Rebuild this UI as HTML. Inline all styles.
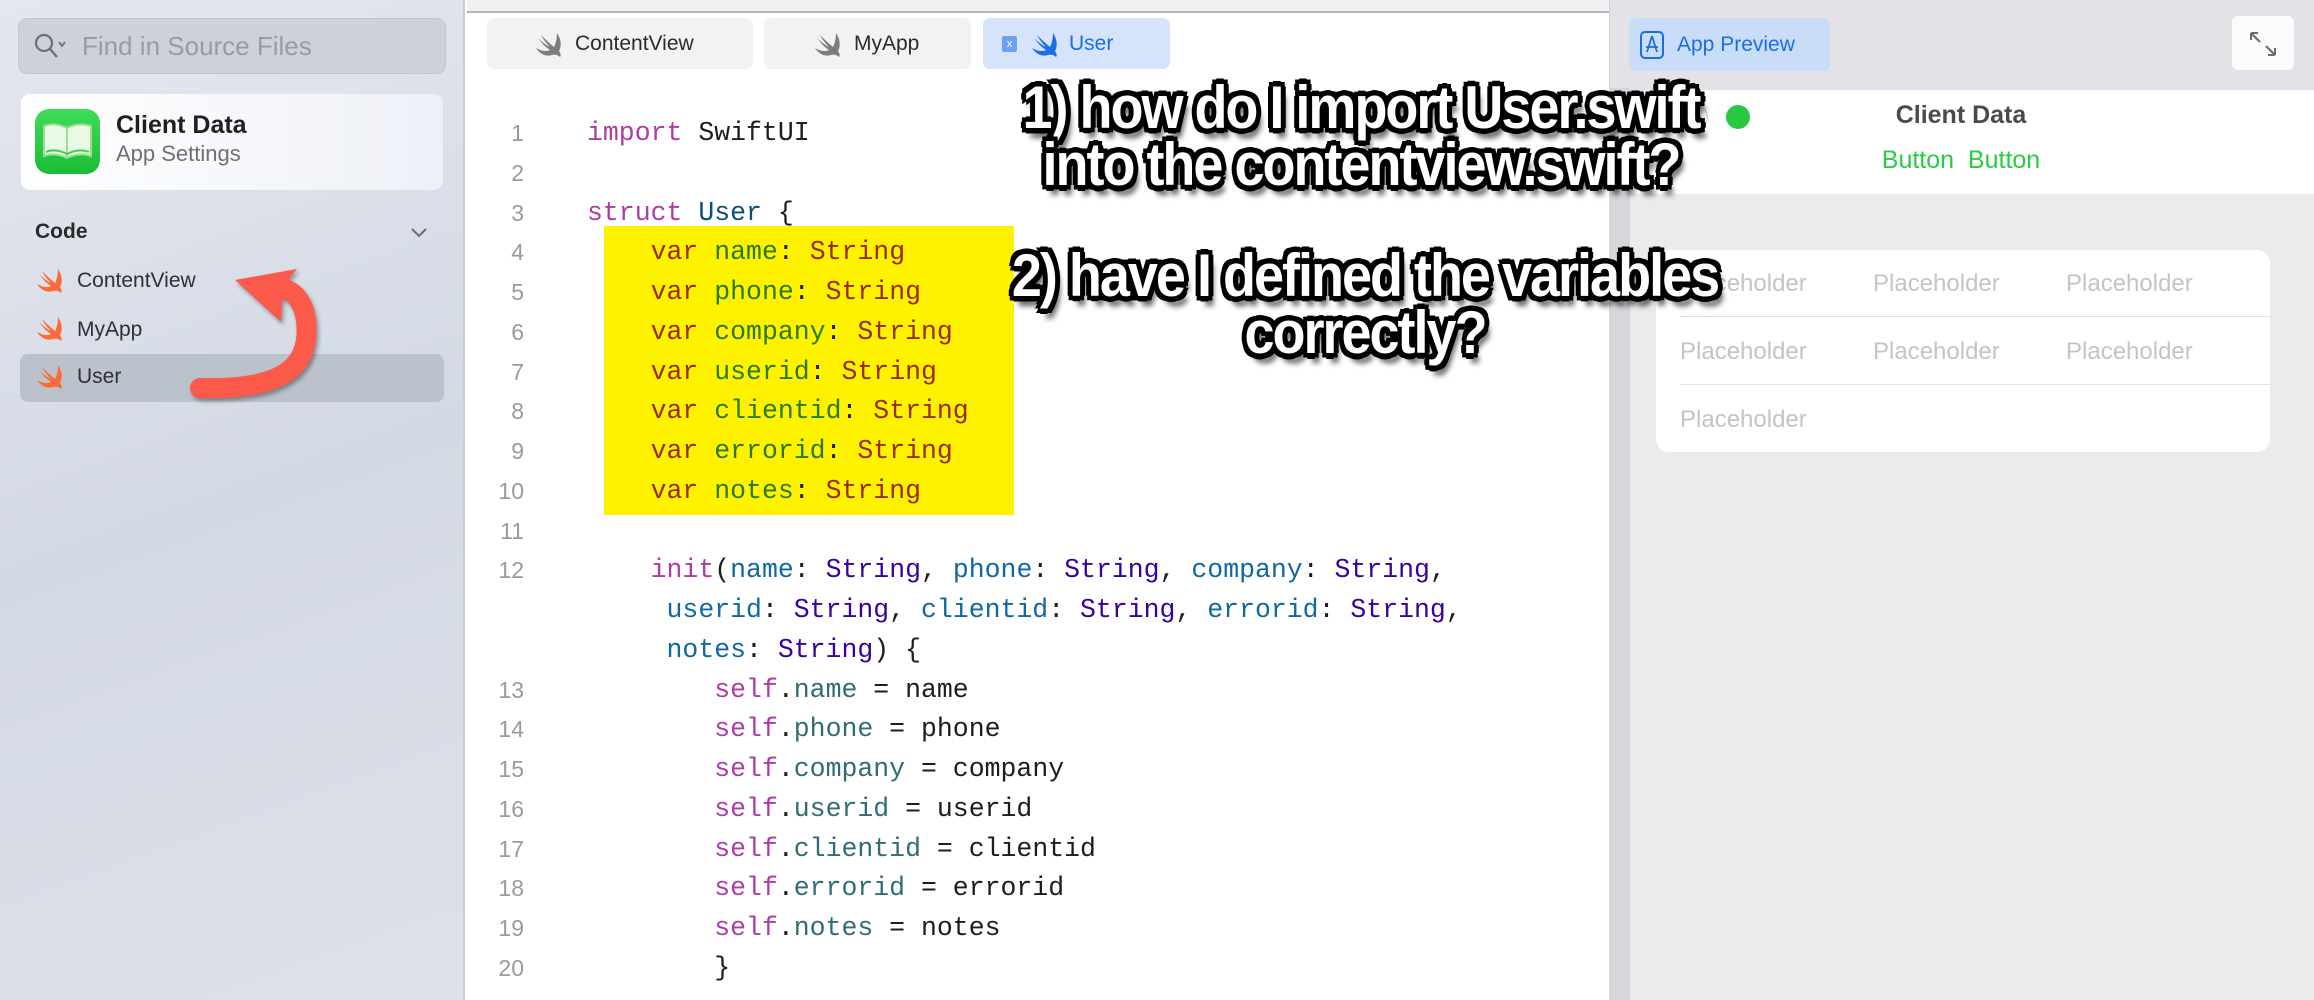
<!DOCTYPE html>
<html><head><meta charset="utf-8"><style>
*{margin:0;padding:0;box-sizing:border-box}
body{width:2314px;height:1000px;overflow:hidden;position:relative;font-family:"Liberation Sans",sans-serif;background:#fff}
.abs{position:absolute}
#side{left:0;top:0;width:465px;height:1000px;background:linear-gradient(160deg,#e4e7ee,#d3d9e4 50%,#dde1e9);border-right:2px solid #c9ccd3}
.code{font-family:"Liberation Mono",monospace;font-size:26.5px;line-height:39.75px;white-space:pre;color:#1d1d1f}
.k{color:#ad3da4}.t{color:#3900a0}.u{color:#0b4f79}.p{color:#326d74}.l{color:#0f68a0}
.yk{color:#9a2a00}.yp{color:#2a7a10}
.ln{font-family:"Liberation Sans",sans-serif;font-size:23px;line-height:39.75px;color:#9a9a9e;text-align:right;white-space:pre}
.tab{top:18px;height:51px;border-radius:7px;background:#f2f2f3;font-size:21px;color:#2b2b2d;display:flex;align-items:center}
.ann{font-family:"Liberation Sans Narrow","Liberation Sans",sans-serif;font-weight:bold;color:#fff;font-size:54px;letter-spacing:-2px;line-height:51px;text-align:center;white-space:nowrap;transform:scaleY(1.12);
text-shadow:-4px -4px 0 #000,4px -4px 0 #000,-4px 4px 0 #000,4px 4px 0 #000,0 -5px 0 #000,0 5px 0 #000,-5px 0 0 #000,5px 0 0 #000,5px 9px 5px rgba(0,0,0,.6)}
.ph{font-size:24px;color:#c4c4c7}
</style></head><body>
<svg width="0" height="0" style="position:absolute"><defs><path id="sw" d="M22 3 C26 9 27 16 24 21 C26 24 26 26 25 27 C23 25 20 24 17 25 C11 27 5 24 1 18 C6 21 11 22 15 20 C10 17 6 12 3 8 C7 12 11 15 15 17 C11 13 8 9 6 5 C10 9 14 13 19 17 C21 13 22 8 22 3 Z"/></defs></svg>
<div id="side" class="abs">
  <div class="abs" style="left:18px;top:18px;width:428px;height:56px;border-radius:9px;background:#cdd1da;border:1px solid #c2c6cf"></div>
  <svg class="abs" style="left:32px;top:30px" width="40" height="32" viewBox="0 0 40 32"><circle cx="12" cy="13" r="8" fill="none" stroke="#6e6f74" stroke-width="2.2"/><path d="M18 19 L25 27" stroke="#6e6f74" stroke-width="2.4"/><path d="M27 12 L30 16 L33 12" fill="none" stroke="#6e6f74" stroke-width="1.8"/></svg>
  <div class="abs" style="left:82px;top:31px;font-size:26px;color:#9a9ca3">Find in Source Files</div>
  <div class="abs" style="left:21px;top:94px;width:422px;height:96px;border-radius:9px;background:linear-gradient(90deg,#fff,#edf0f7)"></div>
  <div class="abs" style="left:35px;top:109px;width:65px;height:65px;border-radius:14px;background:linear-gradient(#3fdc5a,#1bbd33)"></div>
  <svg class="abs" style="left:40px;top:120px" width="55" height="45" viewBox="0 0 55 45"><path d="M4 6 Q15 2 27 8 Q39 2 51 6 L51 36 Q39 32 27 38 Q15 32 4 36 Z" fill="#e9f9e4" stroke="#9adf95" stroke-width="2"/><path d="M27 8 L27 38" stroke="#9adf95" stroke-width="2"/><path d="M6 32 Q15 28 27 34 Q39 28 49 32" fill="none" stroke="#3ccf55" stroke-width="2"/></svg>
  <div class="abs" style="left:116px;top:111px;font-size:25px;font-weight:bold;color:#1f1f22">Client Data</div>
  <div class="abs" style="left:116px;top:141px;font-size:22px;color:#6f7076">App Settings</div>
  <div class="abs" style="left:35px;top:220px;font-size:21px;font-weight:bold;color:#2a2a2d">Code</div>
  <svg class="abs" style="left:410px;top:227px" width="18" height="12" viewBox="0 0 18 12"><path d="M2 2 L9 9 L16 2" fill="none" stroke="#6a6b70" stroke-width="2"/></svg>
  <div class="abs" style="left:20px;top:354px;width:424px;height:48px;border-radius:8px;background:#bcc2cc"></div>
  <div class="abs" style="left:77px;top:269px;font-size:21px;color:#2f3034">ContentView</div>
  <div class="abs" style="left:77px;top:318px;font-size:21px;color:#2f3034">MyApp</div>
  <div class="abs" style="left:77px;top:365px;font-size:21px;color:#2f3034">User</div>
  <svg class="abs" style="left:36px;top:266px" width="28" height="130" viewBox="0 0 28 130">
    <g fill="#fb6a37"><use href="#sw"/><use href="#sw" y="48"/><use href="#sw" y="96"/></g></svg>
  <svg class="abs" style="left:0;top:0" width="465" height="420" viewBox="0 0 465 420">
    <g filter="drop-shadow(2px 3px 2px rgba(0,0,0,.35))">
    <path d="M200 388 C275 390 312 372 306 320 C303 300 294 292 283 288" fill="none" stroke="#fb5a4a" stroke-width="20" stroke-linecap="round"/>
    <path d="M235 280 L297 269 L283 286 L281 322 Z" fill="#fb5a4a"/></g>
  </svg>
</div>
<!-- editor -->
<div class="abs" style="left:467px;top:0;width:1142px;height:13px;background:#f1f1f3;border-bottom:2px solid #b4b4b8"></div>
<div class="abs tab" style="left:487px;width:266px"><svg style="margin:0 12px 0 48px" width="28" height="28" viewBox="0 0 28 28"><use href="#sw" fill="#7d7d80"/></svg>ContentView</div>
<div class="abs tab" style="left:764px;width:207px"><svg style="margin:0 12px 0 50px" width="28" height="28" viewBox="0 0 28 28"><use href="#sw" fill="#7d7d80"/></svg>MyApp</div>
<div class="abs tab" style="left:983px;width:187px;background:#d5e4fb;color:#1a6fe6"><span style="margin-left:19px;width:15px;height:16px;background:#6fa1f2;color:#fff;font-size:11px;text-align:center;line-height:16px;border-radius:2px">x</span><svg style="margin:0 10px 0 14px" width="28" height="28" viewBox="0 0 28 28"><use href="#sw" fill="#1a6fe6"/></svg>User</div>
<div class="abs" style="left:604px;top:226px;width:410px;height:289px;background:#fff200"></div>
<div class="abs ln" style="left:470px;top:114px;width:54px">1
2
3
4
5
6
7
8
9
10
11
12


13
14
15
16
17
18
19
20</div>
<div class="abs code" style="left:587px;top:114px"><span class="k">import</span> SwiftUI

<span class="k">struct</span> <span class="u">User</span> {
    <span class="yk">var</span> <span class="yp">name</span>: <span class="yk">String</span>
    <span class="yk">var</span> <span class="yp">phone</span>: <span class="yk">String</span>
    <span class="yk">var</span> <span class="yp">company</span>: <span class="yk">String</span>
    <span class="yk">var</span> <span class="yp">userid</span>: <span class="yk">String</span>
    <span class="yk">var</span> <span class="yp">clientid</span>: <span class="yk">String</span>
    <span class="yk">var</span> <span class="yp">errorid</span>: <span class="yk">String</span>
    <span class="yk">var</span> <span class="yp">notes</span>: <span class="yk">String</span>

    <span class="k">init</span>(<span class="l">name</span>: <span class="t">String</span>, <span class="l">phone</span>: <span class="t">String</span>, <span class="l">company</span>: <span class="t">String</span>,
     <span class="l">userid</span>: <span class="t">String</span>, <span class="l">clientid</span>: <span class="t">String</span>, <span class="l">errorid</span>: <span class="t">String</span>,
     <span class="l">notes</span>: <span class="t">String</span>) {
        <span class="k">self</span>.<span class="p">name</span> = name
        <span class="k">self</span>.<span class="p">phone</span> = phone
        <span class="k">self</span>.<span class="p">company</span> = company
        <span class="k">self</span>.<span class="p">userid</span> = userid
        <span class="k">self</span>.<span class="p">clientid</span> = clientid
        <span class="k">self</span>.<span class="p">errorid</span> = errorid
        <span class="k">self</span>.<span class="p">notes</span> = notes
        }</div>
<!-- preview -->
<div class="abs" style="left:1609px;top:0;width:705px;height:1000px;background:#e3e3e7;border-left:1px solid #d0d0d4"></div>
<div class="abs" style="left:1609px;top:88px;width:21px;height:912px;background:#d6d7db"></div>
<div class="abs" style="left:1629px;top:18px;width:201px;height:53px;border-radius:7px;background:#c9dcf8;color:#1a6fe6;font-size:21px;display:flex;align-items:center"><svg style="margin:0 12px 0 10px" width="26" height="30" viewBox="0 0 26 30"><rect x="2" y="2" width="22" height="26" rx="4" fill="none" stroke="#1a6fe6" stroke-width="2"/><path d="M13 6 L8 22 M13 6 L18 22 M7 17 L19 17" stroke="#1a6fe6" stroke-width="1.8"/></svg>App Preview</div>
<div class="abs" style="left:2231px;top:15px;width:64px;height:56px;border-radius:7px;background:#fbfbfc;border:1px solid #e0e0e4"></div>
<svg class="abs" style="left:2248px;top:30px" width="30" height="28" viewBox="0 0 30 28"><path d="M3 3 L12 12 M3 3 L3 10 M3 3 L10 3 M27 25 L18 16 M27 25 L27 18 M27 25 L20 25" fill="none" stroke="#6b6b70" stroke-width="2"/></svg>
<div class="abs" style="left:1630px;top:90px;width:684px;height:910px;background:#ebebed;border-top-left-radius:22px;border-top:1px solid #d4d4d8"></div>
<div class="abs" style="left:1630px;top:90px;width:684px;height:104px;background:#fff;border-top-left-radius:22px"></div>
<div class="abs" style="left:1684px;top:105px;width:24px;height:24px;border-radius:50%;border:1px solid #ccc;background:#f4f4f4"></div>
<div class="abs" style="left:1726px;top:105px;width:24px;height:24px;border-radius:50%;background:#28c840"></div>
<div class="abs" style="left:1630px;top:101px;width:662px;text-align:center;font-size:25px;font-weight:bold;color:#4a4a4d">Client Data</div>
<div class="abs" style="left:1630px;top:146px;width:662px;text-align:center;font-size:25px;color:#28cd41">Button&nbsp; Button</div>
<div class="abs" style="left:1656px;top:250px;width:614px;height:202px;border-radius:13px;background:#fff"></div>
<div class="abs" style="left:1680px;top:316px;width:590px;height:1px;background:#e2e2e5"></div>
<div class="abs" style="left:1680px;top:384px;width:590px;height:1px;background:#e2e2e5"></div>
<div class="abs ph" style="left:1680px;top:270px">Placeholder</div><div class="abs ph" style="left:1873px;top:270px">Placeholder</div><div class="abs ph" style="left:2066px;top:270px">Placeholder</div>
<div class="abs ph" style="left:1680px;top:338px">Placeholder</div><div class="abs ph" style="left:1873px;top:338px">Placeholder</div><div class="abs ph" style="left:2066px;top:338px">Placeholder</div>
<div class="abs ph" style="left:1680px;top:406px">Placeholder</div>
<!-- annotations -->
<div class="abs ann" style="left:1011px;top:86px;width:700px">1) how do I import User.swift<br>into the contentview.swift?</div>
<div class="abs ann" style="left:1000px;top:254px;width:730px">2) have I defined the variables<br>correctly?</div>
</body></html>
